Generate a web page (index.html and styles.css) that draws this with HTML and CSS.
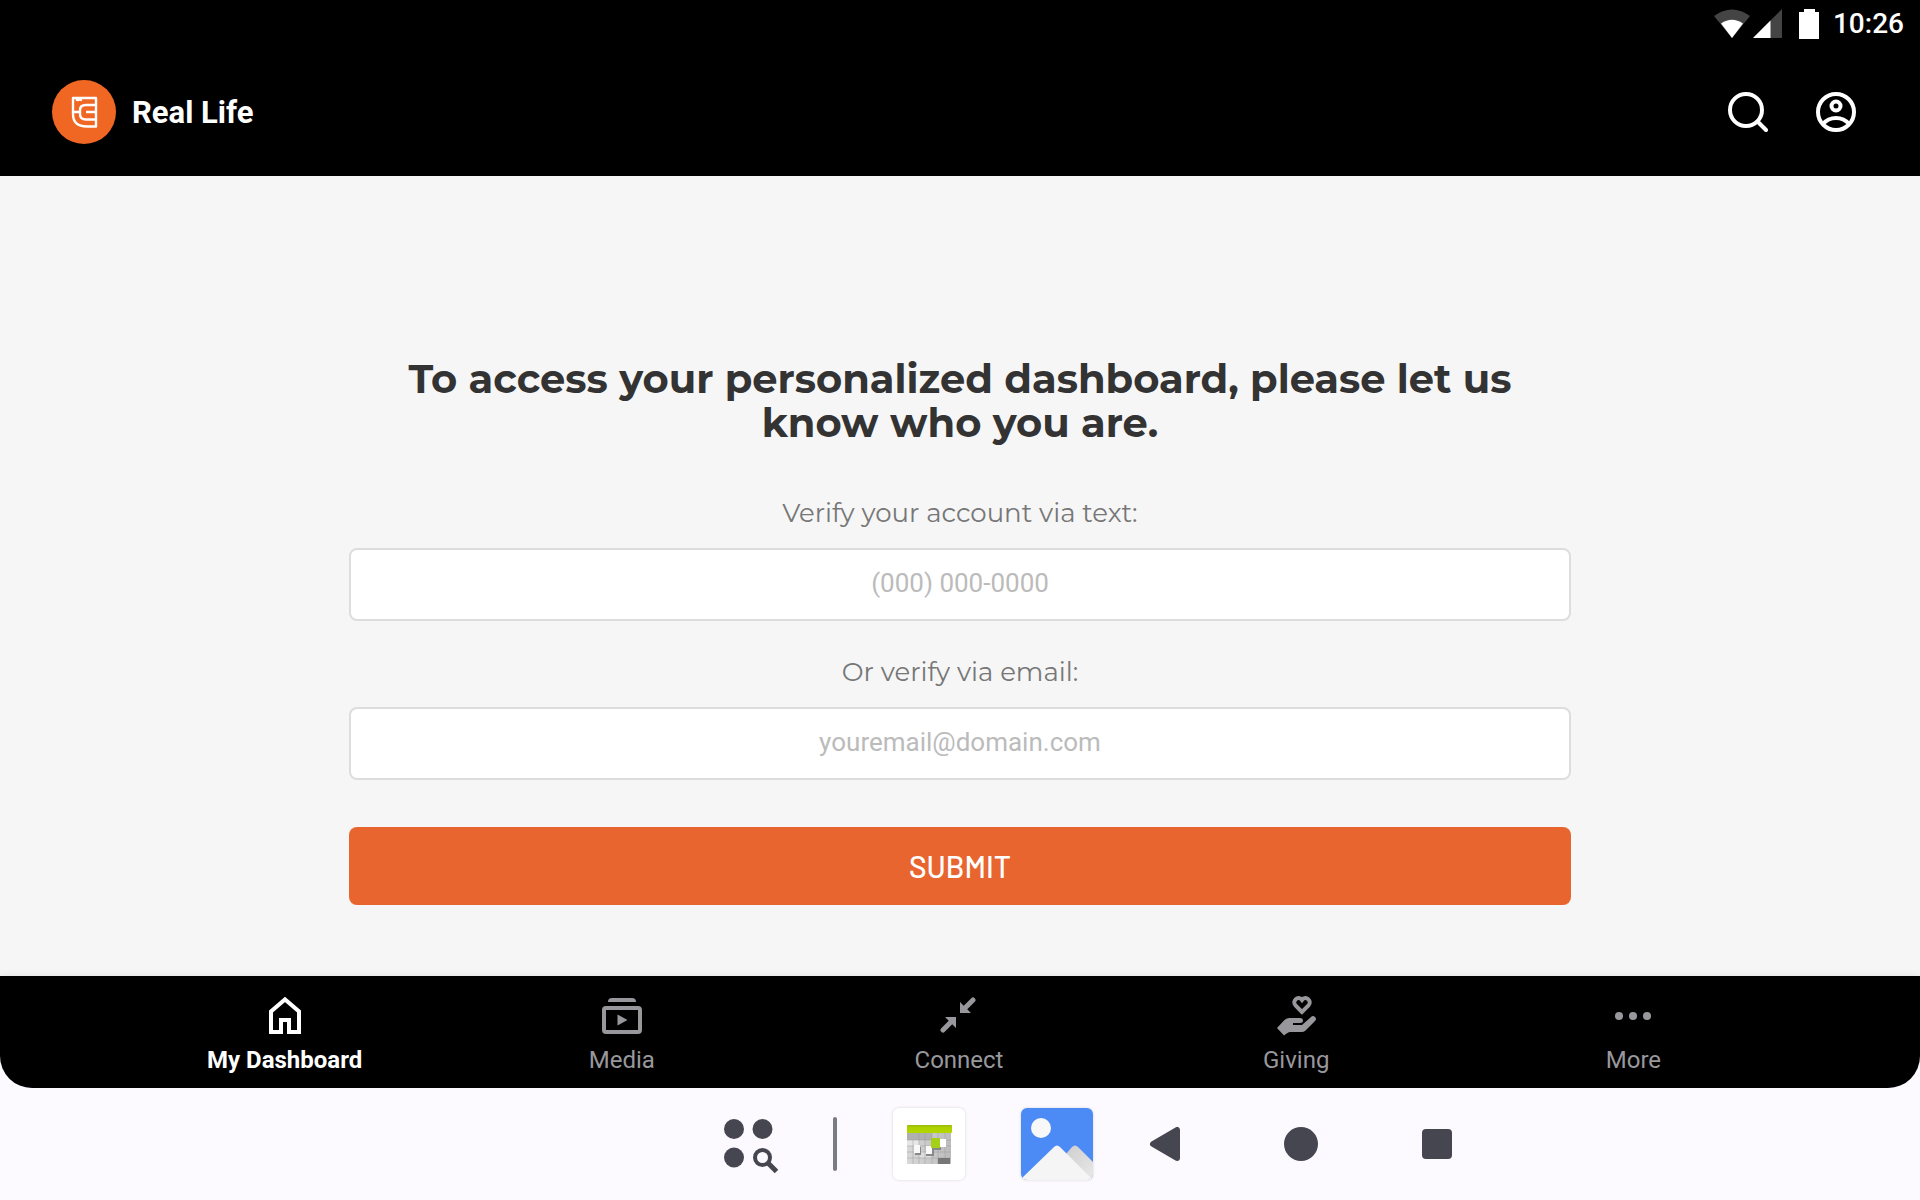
FILE: index.html
```html
<!DOCTYPE html>
<html lang="en">
<head>
    <meta charset="UTF-8">
    <meta name="viewport" content="width=device-width, initial-scale=1.0">
    <title>Real Life</title>
    <link rel="stylesheet" href="styles.css">
</head>
<body>
    <div class="app">
        <div class="status-bar">
            <svg class="wifi" width="36" height="30" viewBox="0 0 36 30">
                <path d="M18 29L0 7Q18 -6 36 7Z" fill="#444"/>
                <path d="M18 29L7 14.500Q18 7 29 14.500Z" fill="#fff"/>
            </svg>
            <svg class="signal" width="30" height="30" viewBox="0 0 30 30">
                <path d="M0 29L29 0V29Z" fill="#444"/>
                <path d="M0 29L17.500 11.500V29Z" fill="#fff"/>
            </svg>
            <svg class="battery" width="20" height="30" viewBox="0 0 20 30">
                <path d="M5 0H16V3H20V30H0V3H5Z" fill="#fff"/>
            </svg>
            <span class="clock">10:26</span>
        </div>

        <header class="header">
            <a class="brand" href="#">
                <svg width="64" height="64" viewBox="0 0 64 64" fill="none" stroke="#fff" stroke-width="2.400" stroke-linejoin="round">
                    <circle cx="32" cy="32" r="32" fill="#f06724" stroke="none"/>
                    <path d="M21 18H44V46.500H35Q21 46.500 21 34Z"/>
                    <path d="M44 25H34Q28 25 28 30V34Q28 39.500 34 39.500H44"/>
                    <path d="M21 32H28M34 32H44M25 18V21M25 21Q26 19 30 20"/>
                </svg>
                <span>Real Life</span>
            </a>
            <div class="header-actions">
                <button type="button" aria-label="Search">
                    <svg width="40" height="40" viewBox="0 0 40 40" fill="none" stroke="#fff" stroke-width="4" stroke-linecap="round">
                        <circle cx="18" cy="18" r="16"/>
                        <path d="M29.500 29.500L38 38"/>
                    </svg>
                </button>
                <button type="button" aria-label="Profile">
                    <svg width="40" height="40" viewBox="0 0 40 40" fill="none" stroke="#fff" stroke-width="4">
                        <circle cx="20" cy="20" r="18"/>
                        <circle cx="20" cy="14" r="4.500"/>
                        <path d="M7 32Q12 26 20 26T33 32"/>
                    </svg>
                </button>
            </div>
        </header>

        <main class="content">
            <form class="verify-form">
                <h1>To access your personalized dashboard, please let us know who you are.</h1>
                <label for="phone">Verify your account via text:</label>
                <input type="tel" id="phone" name="phone" placeholder="(000) 000-0000">
                <label for="email">Or verify via email:</label>
                <input type="email" id="email" name="email" placeholder="youremail@domain.com">
                <button type="submit">SUBMIT</button>
            </form>
        </main>

        <nav class="tab-bar">
            <a class="tab active" href="#">
                <svg width="40" height="40" viewBox="0 0 40 40" fill="none" stroke="currentColor" stroke-width="4">
                    <path d="M6 37V16.500L20 4.500L34 16.500V37H24V25H16V37Z"/>
                </svg>
                <span>My Dashboard</span>
            </a>
            <a class="tab" href="#">
                <svg width="40" height="40" viewBox="0 0 40 40" fill="currentColor">
                    <path d="M6 7Q6 3 10 3H30Q34 3 34 7Z"/>
                    <rect x="2" y="13" width="36" height="24" rx="2" fill="none" stroke="currentColor" stroke-width="4"/>
                    <path d="M15.500 19.500L25.500 25L15.500 30.500Z"/>
                </svg>
                <span>Media</span>
            </a>
            <a class="tab" href="#">
                <svg width="40" height="40" viewBox="0 0 40 40" fill="currentColor">
                    <path d="M34 5L25 14M4 35L14 25" stroke="currentColor" stroke-width="5" stroke-linecap="round"/>
                    <path d="M21 7V18H32ZM6 22H17V33Z"/>
                </svg>
                <span>Connect</span>
            </a>
            <a class="tab" href="#">
                <svg width="40" height="40" viewBox="0 0 40 40" fill="currentColor">
                    <path d="M26 17L19.500 10.500C15.500 6 22 0 26 5C30 0 36.500 6 32.500 10.500Z" fill="none" stroke="currentColor" stroke-width="4"/>
                    <path d="M1 33L8 25.500Q10 23 13 23H24Q27 23 27 25.500Q27 28 24 28H17V30H26L35 22Q37 20 39 22Q41 24 39 26L29.500 35.500Q28 37 25 37H14Q12 37 8 40.500Z"/>
                </svg>
                <span>Giving</span>
            </a>
            <a class="tab" href="#">
                <svg width="40" height="40" viewBox="0 0 40 40" fill="currentColor">
                    <circle cx="6" cy="21" r="4"/>
                    <circle cx="20" cy="21" r="4"/>
                    <circle cx="34" cy="21" r="4"/>
                </svg>
                <span>More</span>
            </a>
        </nav>
    </div>

    <footer class="taskbar">
        <div class="taskbar-apps">
            <button type="button" class="all-apps" aria-label="All apps">
                <svg width="54" height="54" viewBox="-1 -2 54 54" fill="#464650">
                    <circle cx="10" cy="10" r="10"/>
                    <circle cx="38.500" cy="10" r="10"/>
                    <circle cx="10" cy="38.500" r="10"/>
                    <circle cx="38.500" cy="38.500" r="7.500" fill="none" stroke="#464650" stroke-width="4"/>
                    <path d="M43.500 43.500L52.500 52.500" stroke="#464650" stroke-width="5"/>
                </svg>
            </button>
            <span class="divider"></span>
            <button type="button" class="app-icon" aria-label="Calendar">
                <svg width="72" height="72" viewBox="0 0 72 72">
                    <defs>
                        <linearGradient id="green" x1="0" y1="0" x2="0" y2="1">
                            <stop offset="0" stop-color="#94b80c"/>
                            <stop offset="0.300" stop-color="#aed000"/>
                            <stop offset="1" stop-color="#b3d800"/>
                        </linearGradient>
                        <linearGradient id="grid" x1="0" y1="0" x2="1" y2="0">
                            <stop offset="0" stop-color="#d8d8d8"/>
                            <stop offset="1" stop-color="#bcbcbc"/>
                        </linearGradient>
                    </defs>
                    <rect x="14" y="18" width="44" height="38" rx="1" fill="url(#grid)"/>
                    <rect x="14" y="25" width="25" height="7" fill="#b0b0b0"/>
                    <rect x="14" y="32" width="12" height="6" fill="#e6e6e6"/>
                    <rect x="26" y="44" width="13" height="6" fill="#ddd"/>
                    <path d="M20 32V56M26 25V56M32 25V56M39 25V56M45 25V56M52 25V56M14 32H58M14 38H58M14 44H58M14 50H58" stroke="#999" stroke-opacity="0.450"/>
                    <rect x="45" y="50" width="12" height="6" fill="#777"/>
                    <rect x="22" y="39" width="6" height="8" fill="#888"/>
                    <rect x="33" y="39" width="8" height="9" fill="#888"/>
                    <rect x="39" y="32" width="9" height="10" fill="#888"/>
                    <rect x="21" y="37" width="6" height="8" fill="#f8f8f8"/>
                    <rect x="33" y="38" width="6" height="8" fill="#fafafa"/>
                    <rect x="47" y="31" width="6" height="8" fill="#fff"/>
                    <rect x="38" y="30" width="9" height="10" rx="1" fill="#a4d018"/>
                    <rect x="14" y="17" width="45" height="8" rx="1" fill="url(#green)"/>
                </svg>
            </button>
            <button type="button" class="app-icon" aria-label="Gallery">
                <svg width="72" height="72" viewBox="0 0 72 72">
                    <defs>
                        <linearGradient id="hill" x1="0" y1="0" x2="1" y2="1">
                            <stop offset="0" stop-color="#ccc"/>
                            <stop offset="1" stop-color="#e8e8e8"/>
                        </linearGradient>
                    </defs>
                    <rect width="72" height="72" fill="#4c8bf5"/>
                    <circle cx="20" cy="20" r="10" fill="#f8f8f8"/>
                    <path d="M38 54L51 39Q54 36 57 39L72 54V72H38Z" fill="url(#hill)"/>
                    <path d="M0 71L33 39Q36 36 39 39L71 71V72H0Z" fill="#f5f5f5"/>
                </svg>
            </button>
        </div>
        <div class="taskbar-nav">
            <button type="button" aria-label="Back">
                <svg width="34" height="34" viewBox="0 0 34 34" fill="#464650" stroke="#464650" stroke-width="6" stroke-linejoin="round">
                    <path d="M5 17L29 3V31Z"/>
                </svg>
            </button>
            <button type="button" aria-label="Home">
                <svg width="34" height="34" viewBox="0 0 34 34" fill="#464650">
                    <circle cx="17" cy="17" r="17"/>
                </svg>
            </button>
            <button type="button" aria-label="Recent apps">
                <svg width="34" height="34" viewBox="0 0 34 34" fill="#464650">
                    <rect x="2" y="2" width="30" height="30" rx="4"/>
                </svg>
            </button>
        </div>
    </footer>
</body>
</html>
```
FILE: styles.css
```css
* {
    box-sizing: border-box;
}
body {
    display: flex;
    flex-direction: column;
    min-height: 100vh;
    margin: 0;
    font-family: Roboto, sans-serif;
    background-color: #fcfaff;
}
svg {
    display: block;
}
button {
    padding: 0;
    border: none;
    background: none;
    font-family: inherit;
    cursor: pointer;
}
a {
    text-decoration: none;
}
.app {
    flex: 1;
    display: flex;
    flex-direction: column;
    overflow: hidden;
    border-radius: 0 0 32px 32px;
    background-color: #f6f6f6;
}

/* top bars */
.status-bar {
    display: flex;
    justify-content: flex-end;
    align-items: center;
    height: 48px;
    padding-right: 16px;
    background-color: #000;
}
.signal {
    margin: 0 16px 0 3px;
}
.clock {
    margin-left: 14px;
    font-size: 28px;
    font-weight: 500;
    line-height: 50px;
    color: #fff;
}
.header {
    display: flex;
    justify-content: space-between;
    align-items: center;
    height: 128px;
    padding: 0 64px 0 52px;
    background-color: #000;
}
.brand {
    display: flex;
    align-items: center;
    gap: 16px;
    font-size: 31px;
    font-weight: bold;
    color: #fff;
}
.header-actions {
    display: flex;
    gap: 48px;
}

/* verify form */
.content {
    flex: 1;
    padding: 181px 24px 64px;
}
.verify-form {
    display: flex;
    flex-direction: column;
    max-width: 1222px;
    margin: 0 auto;
    text-align: center;
}
.verify-form h1 {
    margin: 0 0 52px;
    padding: 0 48px;
    font-family: Montserrat, Inter, sans-serif;
    font-size: 40px;
    line-height: 44px;
    color: #333;
}
.verify-form label {
    margin-bottom: 19px;
    font-family: Montserrat, Inter, sans-serif;
    font-size: 26px;
    line-height: 32px;
    color: #777;
}
.verify-form input {
    height: 73px;
    margin-bottom: 35px;
    padding: 0 16px 4px;
    border: 2px solid #ddd;
    border-radius: 8px;
    background-color: #fff;
    font-family: inherit;
    font-size: 26px;
    text-align: center;
    color: #333;
}
.verify-form input::placeholder {
    color: #bbb;
}
.verify-form button {
    height: 78px;
    margin-top: 12px;
    border-radius: 8px;
    background-color: #e9652f;
    font-family: Barlow, Roboto, sans-serif;
    font-size: 30px;
    font-weight: 500;
    color: #fff;
}

/* bottom tabs */
.tab-bar {
    display: flex;
    height: 112px;
    padding: 19px 118px 0 116px;
    background-color: #000;
    box-shadow: 0 0 8px rgba(0, 0, 0, 0.1);
}
.tab {
    flex: 1;
    display: flex;
    flex-direction: column;
    align-items: center;
    gap: 11px;
    font-size: 24px;
    line-height: 28px;
    color: #98989c;
}
.tab svg {
    overflow: visible;
}
.tab.active {
    font-weight: bold;
    color: #fff;
}

/* system taskbar */
.taskbar {
    display: flex;
    justify-content: center;
    align-items: center;
    gap: 4px;
    height: 112px;
    padding-left: 308px;
}
.taskbar-apps {
    display: flex;
    align-items: center;
    gap: 56px;
}
.all-apps svg {
    overflow: visible;
}
.divider {
    width: 4px;
    height: 54px;
    border-radius: 2px;
    background-color: #7c7a84;
}
.app-icon {
    overflow: hidden;
    border-radius: 6px;
    background-color: #fff;
    box-shadow: 0 0 3px rgba(0, 0, 0, 0.15);
}
.taskbar-nav {
    display: flex;
}
.taskbar-nav button {
    display: flex;
    justify-content: center;
    width: 136px;
}
```
